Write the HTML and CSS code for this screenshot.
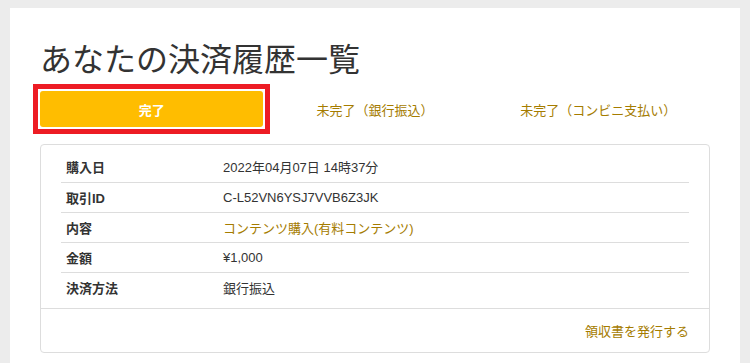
FILE: index.html
```html
<!DOCTYPE html>
<html lang="ja">

<head>
    <meta charset="UTF-8">
    <meta name="viewport" content="width=device-width, initial-scale=1.0">
    <title>決済履歴</title>
    <link rel="stylesheet" href="styles.css">
</head>

<body>
    <main class="panel">
        <h1 class="title">あなたの決済履歴一覧</h1>
        <nav class="tabs">
            <button class="tab active">完了</button>
            <button class="tab">未完了（銀行振込）</button>
            <button class="tab">未完了（コンビニ支払い）</button>
        </nav>
        <section class="card">
            <table class="detail">
                <tr>
                    <th>購入日</th>
                    <td>2022年04月07日 14時37分</td>
                </tr>
                <tr>
                    <th>取引ID</th>
                    <td>C-L52VN6YSJ7VVB6Z3JK</td>
                </tr>
                <tr>
                    <th>内容</th>
                    <td><a href="#" class="link">コンテンツ購入(有料コンテンツ)</a></td>
                </tr>
                <tr>
                    <th>金額</th>
                    <td>¥1,000</td>
                </tr>
                <tr>
                    <th>決済方法</th>
                    <td>銀行振込</td>
                </tr>
            </table>
            <div class="card-footer">
                <a href="#" class="link">領収書を発行する</a>
            </div>
        </section>
    </main>
</body>

</html>
```

FILE: styles.css
```css
* {
    padding: 0;
    margin: 0;
    box-sizing: border-box;
}

body {
    background-color: #ececec;
    padding: 8px 10px 0 10px;
    font-family: "Liberation Sans", "Noto Sans CJK JP", sans-serif;
    font-size: 13px;
    color: #333;
}

.panel {
    background-color: #fff;
    padding: 29px 30px 40px 30px;
    min-height: 400px;
}

.title {
    font-family: "Noto Sans CJK JP", sans-serif;
    font-size: 32px;
    font-weight: 400;
    line-height: 40px;
    color: #333;
}

.tabs {
    display: grid;
    grid-template-columns: 1fr 1fr 1fr;
    margin-top: 14px;
}

.tab {
    position: relative;
    height: 36px;
    border: none;
    border-radius: 3px;
    background: none;
    font-family: inherit;
    font-size: 13px;
    color: #a57c00;
    cursor: pointer;
}

.tab.active {
    background-color: #ffbd00;
    color: #fff;
    font-weight: 700;
}

/* highlight frame around the selected tab */
.tab.active::after {
    content: "";
    position: absolute;
    top: -7px;
    left: -7px;
    right: -7px;
    bottom: -7px;
    border: 5px solid #ed1c24;
}

.card {
    margin-top: 17px;
    border: 1px solid #ddd;
    border-radius: 4px;
}

.detail {
    width: calc(100% - 40px);
    border-collapse: collapse;
    margin: 7px 20px 6px 20px;
}

.detail tr + tr {
    border-top: 1px solid #ddd;
}

.detail th,
.detail td {
    height: 30px;
    padding: 0 5px;
    text-align: left;
    vertical-align: middle;
}

.detail th {
    width: 157px;
    font-weight: 700;
}

.link {
    color: #a57c00;
    text-decoration: none;
}

.card-footer {
    border-top: 1px solid #ddd;
    height: 44px;
    padding: 0 20px;
    display: flex;
    justify-content: flex-end;
    align-items: center;
}
```
